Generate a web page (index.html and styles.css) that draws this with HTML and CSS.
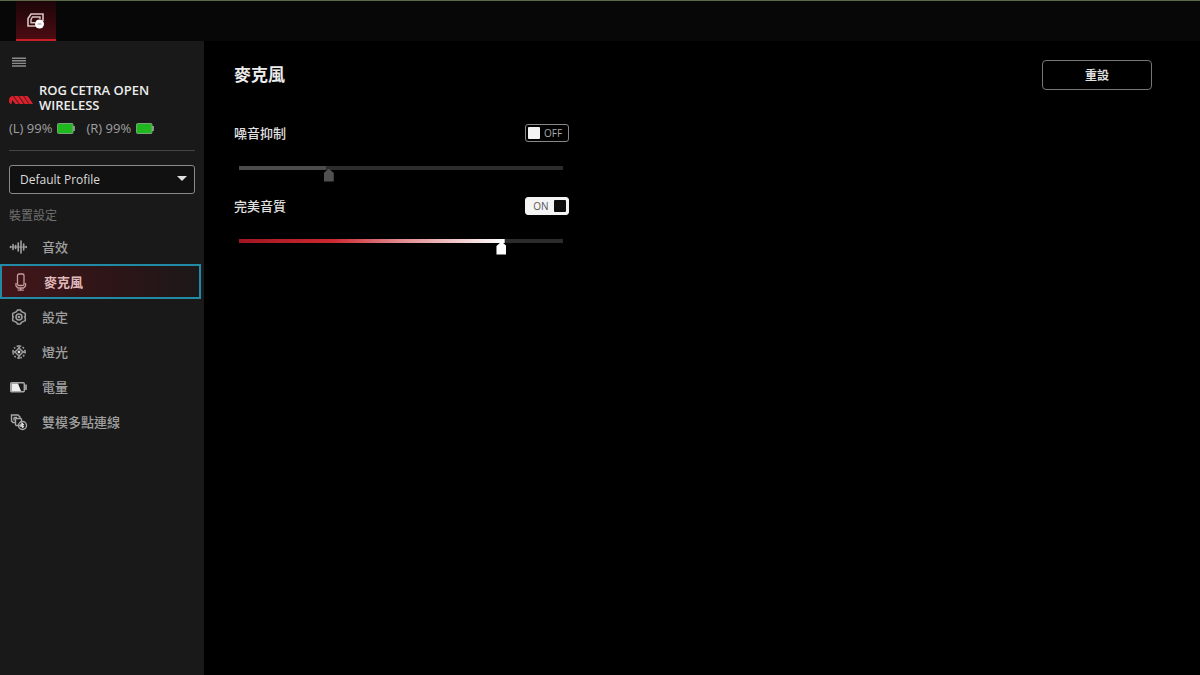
FILE: index.html
```
<!DOCTYPE html>
<html lang="zh-Hant">
<head>
    <meta charset="UTF-8">
    <title>ROG CETRA OPEN WIRELESS</title>
    <link rel="stylesheet" href="styles.css">
</head>
<body>
    <header class="topbar">
        <button class="tab" type="button" aria-label="Device">
            <svg width="20" height="18" viewBox="0 0 20 18" fill="none" stroke="#d8c4c4" stroke-width="1.6">
                <path d="M10 14H2V6.500L5 2h12v7"/>
                <path d="M9 10.800H5V7.500L6.500 5H14v2" stroke-width="1.400"/>
                <circle cx="13.500" cy="12" r="4.500" fill="#fff" stroke="none"/>
                <path d="M11.500 12h4" stroke="#b08888" stroke-width="1"/>
            </svg>
        </button>
    </header>

    <div class="page">
        <aside class="sidebar">
            <button class="menu" type="button" aria-label="Menu">
                <svg width="14" height="10" viewBox="0 0 14 10" stroke="#8c8c8c" stroke-width="1.4">
                    <path d="M0 1.2h14M0 3.8h14M0 6.4h14M0 9h14"/>
                </svg>
            </button>

            <div class="device">
                <svg width="24" height="10" viewBox="0 0 24 10" fill="#d9202c">
                    <path d="M0 6Q0 1 4 1l5.800 8H6.300L3.200 5 2.500 9Q0 9 0 6z"/>
                    <path d="M4.800 1h4.400l5.600 8h-4.200z"/>
                    <path d="M10 1h4.200l5.600 8h-4.200z"/>
                    <path d="M15 1h3.200Q19 1 24 9h-3.600z"/>
                </svg>
                <h1>ROG CETRA OPEN WIRELESS</h1>
            </div>

            <div class="batteries">
                <span>(L) 99%</span>
                <svg width="18" height="11" viewBox="0 0 18 11">
                    <rect x=".5" y=".5" width="15.500" height="10" rx="1" fill="#1fb91f" stroke="#7fa07f"/>
                    <path d="M17 3v5" stroke="#a8b8a8" stroke-width="1.500"/>
                </svg>
                <span class="right">(R) 99%</span>
                <svg width="18" height="11" viewBox="0 0 18 11">
                    <rect x=".5" y=".5" width="15.500" height="10" rx="1" fill="#1fb91f" stroke="#7fa07f"/>
                    <path d="M17 3v5" stroke="#a8b8a8" stroke-width="1.500"/>
                </svg>
            </div>

            <div class="profile">
                <select aria-label="Profile">
                    <option>Default Profile</option>
                </select>
            </div>

            <h2>裝置設定</h2>
            <nav>
                <a href="#audio">
                    <svg width="20" height="18" viewBox="0 0 20 18" stroke="#a0a0a0" stroke-width="1.600" stroke-linecap="round">
                        <path d="M1.500 8.500v1M4 6.500v5M6.600 7.500v3M9.200 5v8M12 3v12M14.700 6v6M17.200 8.500v1"/>
                        <path d="M1.500 9h15.500" stroke-width="1"/>
                    </svg>
                    音效
                </a>
                <a href="#mic" class="active">
                    <svg width="20" height="18" viewBox="0 0 20 18" fill="none" stroke="#c89c9c" stroke-width="1.300">
                        <rect x="6.500" y="1" width="6.500" height="11.500" rx="1.500"/>
                        <path d="M5 10v3l2 2h5.500l2-2v-3M9.700 15v2M6.700 17.200h6"/>
                    </svg>
                    麥克風
                </a>
                <a href="#settings">
                    <svg width="20" height="18" viewBox="0 0 20 18" fill="none" stroke="#a0a0a0" stroke-width="1.500">
                        <path d="M8.500 2h3l1 1.600 3.800 1.800v2.600l-.6 1 .6 1v2.600l-3.800 1.800-1 1.600h-3l-1-1.600-3.800-1.800V10l.6-1-.6-1V5.400l3.800-1.800z"/>
                        <circle cx="10" cy="9" r="3"/>
                        <circle cx="10" cy="9" r=".6"/>
                    </svg>
                    設定
                </a>
                <a href="#light">
                    <svg width="20" height="18" viewBox="0 0 20 18" fill="none" stroke="#a0a0a0" stroke-width="1.500">
                        <path d="M10 2v3M10 13v3M3 9h3M14 9h3"/>
                        <circle cx="10" cy="9" r="6" stroke-width="1.600" stroke-dasharray="1.600 1.540"/>
                        <path d="M10 5L14 9 10 13 6 9z"/>
                        <circle cx="10" cy="9" r="1.400" fill="#ddd" stroke="none"/>
                    </svg>
                    燈光
                </a>
                <a href="#power">
                    <svg width="20" height="18" viewBox="0 0 20 18" fill="none" stroke="#a8a8a8" stroke-width="1.400">
                        <rect x="1.700" y="4.700" width="13.600" height="9" rx="1"/>
                        <path d="M17 6.500v5.500" stroke-width="1.700"/>
                        <path d="M2.500 5.500h6.500l3 7.500H2.500z" fill="#eee" stroke="none"/>
                    </svg>
                    電量
                </a>
                <a href="#multipoint">
                    <svg width="20" height="18" viewBox="0 0 20 18" fill="none" stroke="#a8a8a8" stroke-width="1.400">
                        <path d="M7 9.500H4L2.500 8V2h6.500l2 2v2"/>
                        <path d="M5 4.500h3M5 4.500v3"/>
                        <rect x="6.500" y="5.500" width="6" height="7" rx="1"/>
                        <circle cx="13.500" cy="12.500" r="4"/>
                        <path d="M13.500 10v5M11.500 11.500l3.500 2.500M11.500 13.800l3.500-2.500" stroke="#ddd" stroke-width="1.200"/>
                    </svg>
                    雙模多點連線
                </a>
            </nav>
        </aside>

        <main>
            <div class="head">
                <h2>麥克風</h2>
                <button class="reset" type="button">重設</button>
            </div>

            <section class="option">
                <div class="row">
                    <h3 id="noise">噪音抑制</h3>
                    <label class="toggle">
                        <input type="checkbox" aria-labelledby="noise">
                        <span>OFF</span>
                    </label>
                </div>
                <input class="slider" type="range" min="0" max="100" value="27" aria-labelledby="noise" style="--value: 27%" disabled>
            </section>

            <section class="option">
                <div class="row">
                    <h3 id="perfect">完美音質</h3>
                    <label class="toggle on">
                        <input type="checkbox" aria-labelledby="perfect" checked>
                        <span>ON</span>
                    </label>
                </div>
                <input class="slider" type="range" min="0" max="100" value="82" aria-labelledby="perfect" style="--value: 82%">
            </section>
        </main>
    </div>
</body>
</html>
```

FILE: styles.css
```
* {
    box-sizing: border-box;
}

body {
    margin: 0;
    min-height: 100vh;
    display: flex;
    flex-direction: column;
    background-color: #000;
    color: #e0e0e0;
    font-family: "Open Sans", "Noto Sans CJK TC", sans-serif;
    font-size: 13px;
}

h1, h2, h3 {
    margin: 0;
}

button, select {
    font: inherit;
    color: inherit;
}

svg {
    flex: none;
}

.topbar {
    display: flex;
    height: 41px;
    padding-left: 16px;
    border-top: 1px solid #5c6a48;
    background-color: #070707;
}

.tab {
    width: 40px;
    padding: 5px 0 0;
    border: 0;
    border-bottom: 2px solid #c81e28;
    background: linear-gradient(#1c0508, #4a0c12);
}

.page {
    flex: 1;
    display: flex;
}

.sidebar {
    width: 204px;
    background-color: #191919;
}

.menu {
    display: flex;
    margin: 16px 0 0 12px;
    padding: 0;
    border: 0;
    background: none;
}

.device {
    display: flex;
    align-items: center;
    gap: 6px;
    padding: 16px 40px 0 9px;
}

.device svg {
    margin-top: 4px;
}

.device h1 {
    font-size: 13px;
    line-height: 15px;
    font-weight: 600;
    color: #ececec;
}

.batteries {
    display: flex;
    align-items: center;
    gap: 5px;
    margin: 0 9px;
    padding: 6px 0 13px;
    border-bottom: 1px solid #444;
    line-height: 18px;
    color: #a0a0a0;
}

.batteries .right {
    margin-left: 6px;
}

.profile {
    position: relative;
    margin: 14px 9px 0;
}

.profile select {
    display: block;
    width: 100%;
    height: 29px;
    padding: 0 10px;
    border: 1px solid #8a8a8a;
    border-radius: 3px;
    background-color: #111;
    appearance: none;
    font-size: 12px;
    color: #dcdcdc;
}

.profile::after {
    content: "";
    position: absolute;
    top: 11px;
    right: 8px;
    border: 5px solid transparent;
    border-top-color: #e0e0e0;
    border-bottom: 0;
}

.sidebar h2 {
    margin: 13px 9px 4px;
    font-size: 12px;
    line-height: 18px;
    font-weight: 400;
    color: #707070;
}

nav a {
    display: flex;
    align-items: center;
    gap: 13px;
    height: 35px;
    margin-right: 3px;
    padding-left: 9px;
    color: #a0a0a0;
    text-decoration: none;
    font-weight: 500;
}

nav a.active {
    border: 2px solid #218ba6;
    background: linear-gradient(90deg, #42161a, #2c1517 60%, #1c1819);
    color: #e0baba;
    font-weight: 700;
}

main {
    flex: 1;
    padding: 19px 48px 0 30px;
}

.head {
    display: flex;
    justify-content: space-between;
    align-items: center;
    margin-bottom: 34px;
}

.head h2 {
    font-size: 17px;
    line-height: 24px;
    color: #ececec;
}

.reset {
    width: 110px;
    height: 30px;
    padding: 0;
    border: 1px solid #777;
    border-radius: 4px;
    background-color: #000;
    font-size: 12px;
    font-weight: 700;
}

.option {
    width: 335px;
    margin-bottom: 15px;
}

.row {
    display: flex;
    justify-content: space-between;
    align-items: center;
    height: 18px;
}

.row h3 {
    font-size: 13px;
    line-height: 18px;
    font-weight: 500;
}

.toggle {
    display: flex;
    align-items: center;
    width: 44px;
    height: 18px;
    padding: 2px;
    border: 1px solid #888;
    border-radius: 3px;
    font-size: 10px;
    line-height: 12px;
    color: #aaa;
}

.toggle input {
    flex: none;
    width: 12px;
    height: 12px;
    margin: 0;
    border-radius: 1px;
    background-color: #f4f4f4;
    appearance: none;
}

.toggle span {
    flex: 1;
    text-align: center;
}

.toggle.on {
    flex-direction: row-reverse;
    border-color: #f4f4f4;
    background-color: #f4f4f4;
    color: #555;
}

.toggle.on input {
    background-color: #0c0c0c;
}

.slider {
    display: block;
    width: 324px;
    height: 16px;
    margin: 24px 0 0 5px;
    appearance: none;
    background: linear-gradient(90deg, #a01620, #cc2830 35%, #e0888c 60%, #fff) 0 0 / var(--value) 4px no-repeat,
        linear-gradient(#2c2c2c, #2c2c2c) 0 0 / 100% 4px no-repeat;
}

.slider:disabled {
    background: linear-gradient(#4c4c4c, #4c4c4c) 0 0 / var(--value) 4px no-repeat,
        linear-gradient(#2c2c2c, #2c2c2c) 0 0 / 100% 4px no-repeat;
}

.slider::-webkit-slider-thumb {
    width: 10px;
    height: 13px;
    margin-top: 2px;
    appearance: none;
    background-color: #fff;
    clip-path: polygon(50% 0, 100% 35%, 100% 100%, 0 100%, 0 35%);
}

.slider:disabled::-webkit-slider-thumb {
    background-color: #505050;
}
```
